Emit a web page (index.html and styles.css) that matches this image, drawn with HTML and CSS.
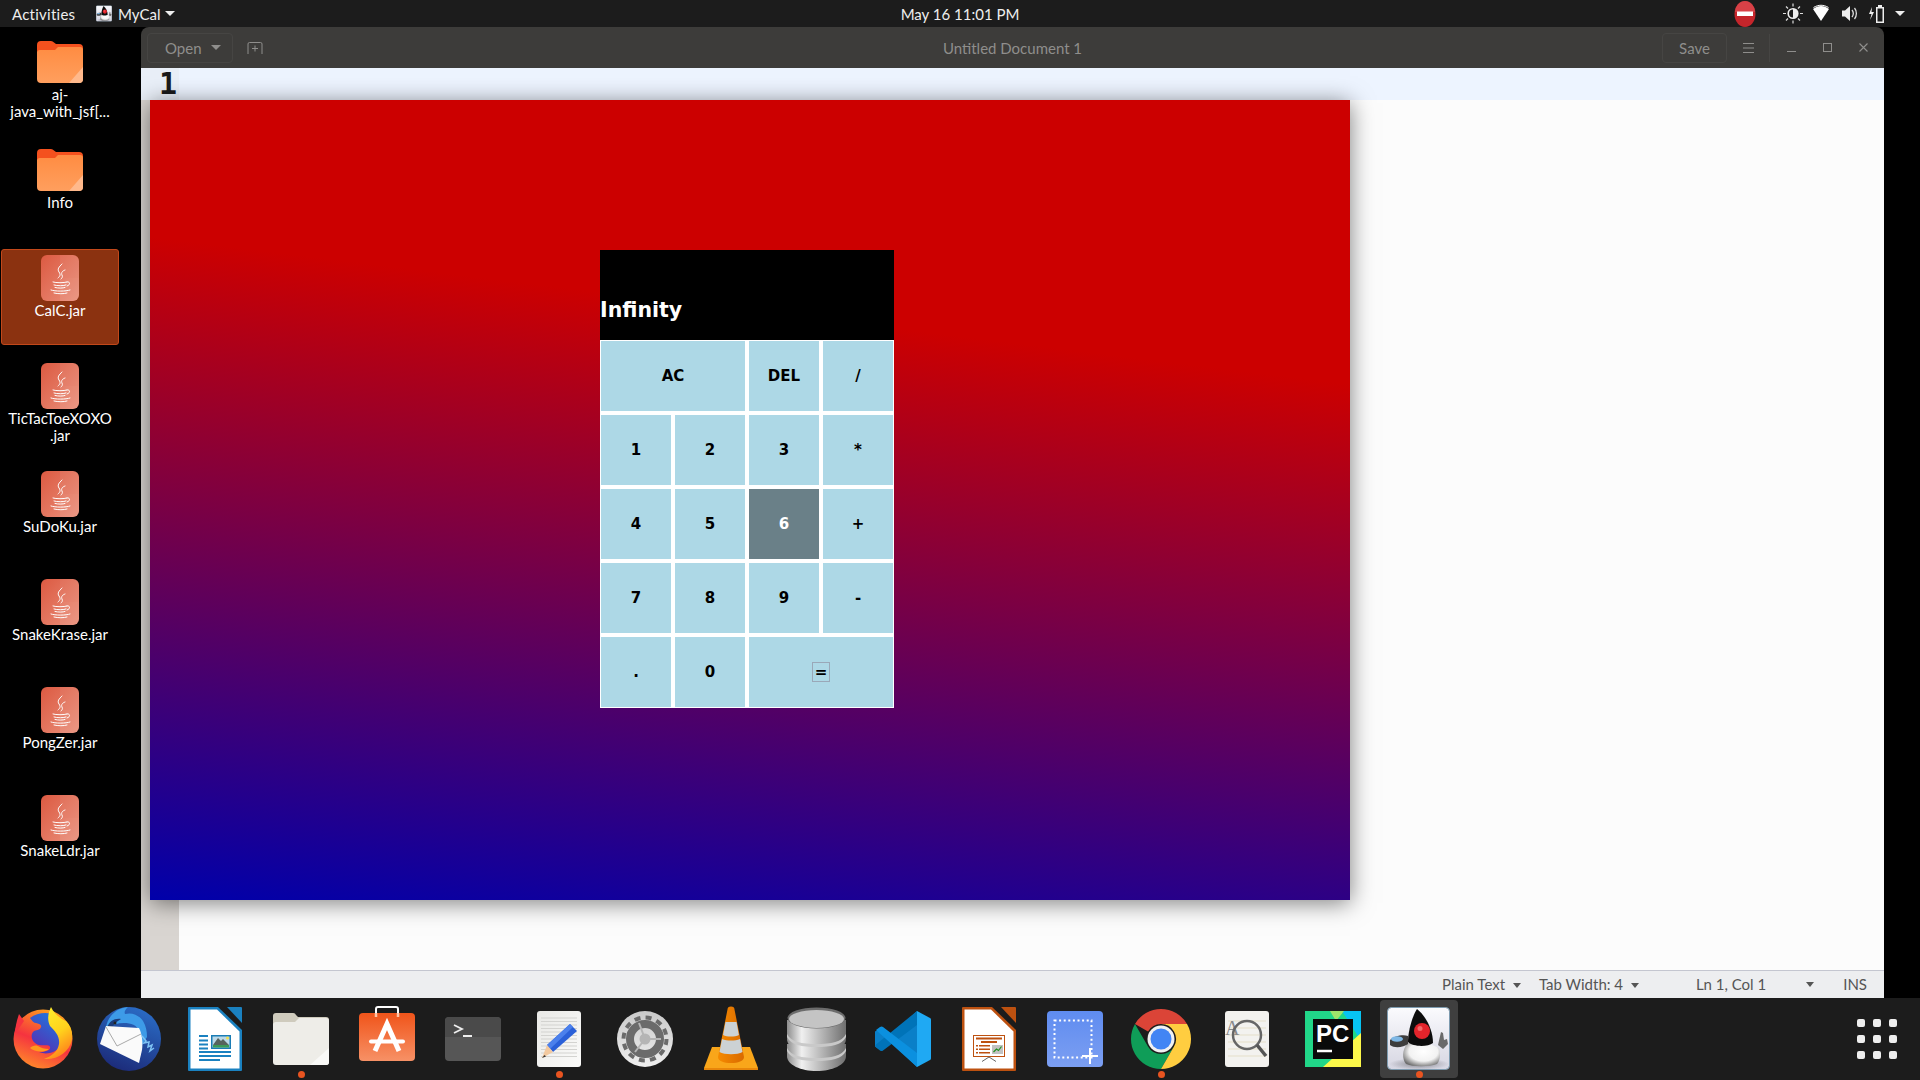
FILE: index.html
```html
<!DOCTYPE html>
<html lang="en">
<head>
  <meta charset="UTF-8" />
  <title>MyCal</title>
  <link rel="stylesheet" href="styles.css">
</head>
<body>

  <svg class="defs" width="0" height="0">
    <defs>
      <linearGradient id="g-folder" x1="0" y1="0" x2="0" y2="1"><stop offset="0" stop-color="#ff8c42"/><stop offset="1" stop-color="#ff9f5e"/></linearGradient>
      <linearGradient id="g-jar" x1="0" y1="0" x2="1" y2="1"><stop offset="0" stop-color="#dc5a42"/><stop offset="1" stop-color="#ea8f7a"/></linearGradient>
      <linearGradient id="g-ff" x1="0.7" y1="0" x2="0.3" y2="1"><stop offset="0" stop-color="#ffa51c"/><stop offset="0.55" stop-color="#f5333f"/><stop offset="1" stop-color="#ff8a2a"/></linearGradient>
      <linearGradient id="g-ffy" x1="0" y1="0" x2="0.4" y2="1"><stop offset="0" stop-color="#fff02e"/><stop offset="0.6" stop-color="#ffd21c"/><stop offset="1" stop-color="#ff8a1c"/></linearGradient>
      <linearGradient id="g-ffb" x1="0.8" y1="0" x2="0.2" y2="1"><stop offset="0" stop-color="#1b7be0"/><stop offset="1" stop-color="#5b2bb0"/></linearGradient>
      <linearGradient id="g-tb" x1="0.7" y1="0" x2="0.3" y2="1"><stop offset="0" stop-color="#2a6cc6"/><stop offset="1" stop-color="#1c2a78"/></linearGradient>
      <linearGradient id="g-bag" x1="0" y1="0" x2="0" y2="1"><stop offset="0" stop-color="#f0541a"/><stop offset="1" stop-color="#f79166"/></linearGradient>
      <linearGradient id="g-paper" x1="0" y1="0" x2="1" y2="1"><stop offset="0" stop-color="#e9e9e6"/><stop offset="1" stop-color="#fbfbfa"/></linearGradient>
      <linearGradient id="g-gear" x1="0" y1="0" x2="0" y2="1"><stop offset="0" stop-color="#c9c9c9"/><stop offset="1" stop-color="#efefef"/></linearGradient>
      <linearGradient id="g-cone" x1="0" y1="0" x2="1" y2="0"><stop offset="0" stop-color="#f58a00"/><stop offset="1" stop-color="#d96a00"/></linearGradient>
      <linearGradient id="g-db" x1="0" y1="0" x2="1" y2="0"><stop offset="0" stop-color="#8d8d8d"/><stop offset="0.25" stop-color="#f0f0f0"/><stop offset="1" stop-color="#6f6f6f"/></linearGradient>
      <linearGradient id="g-shot" x1="0" y1="0" x2="0" y2="1"><stop offset="0" stop-color="#5f8cf0"/><stop offset="1" stop-color="#7c9ff2"/></linearGradient>
      <linearGradient id="g-duke" x1="0" y1="0" x2="0" y2="1"><stop offset="0" stop-color="#fbfbfe"/><stop offset="1" stop-color="#d6d6e2"/></linearGradient>
      <radialGradient id="g-duke-body" cx="0.55" cy="0.4" r="0.65"><stop offset="0" stop-color="#fff"/><stop offset="0.6" stop-color="#f2f2f2"/><stop offset="1" stop-color="#6e6e6e"/></radialGradient>
      <radialGradient id="g-duke-floor"><stop offset="0" stop-color="#8a8a92"/><stop offset="1" stop-color="#8a8a92" stop-opacity="0"/></radialGradient>

      <symbol id="folder" viewBox="0 0 46 42">
        <path d="M0 4a4 4 0 0 1 4-4h10a4 4 0 0 1 3 1.500l2 1.500h23a4 4 0 0 1 4 4v10H0z" fill="#f4511e"/>
        <path d="M0 11a3 3 0 0 1 3-2h15l3-3h22a3 3 0 0 1 3 3v29a4 4 0 0 1-4 4H4a4 4 0 0 1-4-4z" fill="url(#g-folder)"/>
        <path d="M46 26v12a4 4 0 0 1-4 4H32z" fill="#ffb98c"/>
      </symbol>

      <symbol id="jar" viewBox="0 0 38 46">
        <rect width="38" height="46" rx="6" fill="url(#g-jar)"/>
        <path d="M19 0h13a6 6 0 0 1 6 6v17H19z" fill="#fff" opacity=".06"/>
        <path d="M19 23h19v17a6 6 0 0 1-6 6H19z" fill="#fff" opacity=".08"/>
        <g fill="none" stroke="#fff" stroke-width="1" stroke-linecap="round">
          <path d="M21 9c-3 3-5 5-3 8s1 4-1 6"/>
          <path d="M24 15c-3 1-4 3-3 5s0 3-1 4"/>
          <path d="M12 27c3 1 11 1 14 0M13 30c3 1 10 1 12 0M14 32.500c3 .8 8 .8 10 0"/>
          <path d="M26 27c3-1 4 3 0 4"/>
          <path d="M10 35c4 1.500 15 1.500 19 0M13 38c4 1 10 1 13 0"/>
        </g>
      </symbol>

      <symbol id="duke" viewBox="11 9 63 63">
        <rect x="11.500" y="9.500" width="62" height="62" rx="4" fill="url(#g-duke)" stroke="#7d9bb0"/>
        <ellipse cx="43" cy="66" rx="30" ry="6" fill="url(#g-duke-floor)"/>
        <path d="M31 46c4-3 18-3 23 0l9 4c2 6 1 13-2 16-8 3-24 3-31 0-4-5-4-14 1-20z" fill="url(#g-duke-body)"/>
        <path d="M41 11c-4 6-9 21-9 33 5 5 20 5 25 1 0-13-7-27-16-34z" fill="#0d0d0d"/>
        <circle cx="46" cy="33" r="8" fill="#e3242b"/>
        <circle cx="44" cy="30.500" r="2.500" fill="#f26a6a"/>
        <path d="M14 42c4-4 13-6 18-4v8c-4 3-13 5-18 1z" fill="#3d3d3d"/>
        <ellipse cx="21" cy="41" rx="6" ry="2.800" fill="#7fb8e6"/>
        <path d="M62 47l3-13 2 1 1 7 3-1 1 5-5 5z" fill="#6a6a6a"/>
      </symbol>
    </defs>
  </svg>

  <div class="screen">

    <header class="topbar">
      <div class="topbar-left">
        <span class="activities">Activities</span>
        <svg class="app-icon"><use href="#duke"/></svg>
        <span>MyCal</span>
        <span class="caret caret-light"></span>
      </div>
      <div class="clock">May 16 11:01 PM</div>
      <div class="topbar-right">
        <svg class="no-entry" viewBox="0 0 22 26">
          <ellipse cx="11" cy="13" rx="10.500" ry="13" fill="#c5252b"/>
          <path d="M1 11a10 11 0 0 1 20 0z" fill="#e5555a" opacity=".6"/>
          <rect x="3" y="10.500" width="16" height="4.500" fill="#fff"/>
        </svg>
        <svg class="tray" viewBox="0 0 28 27">
          <circle cx="14" cy="13.500" r="4.800" fill="none" stroke="#eee" stroke-width="1.600"/>
          <path d="M14 8.700a4.800 4.800 0 0 1 0 9.600z" fill="#eee"/>
          <path d="M14 3.500v3M14 20.500v3M4 13.500h3M21 13.500h3M7 6.500l2 2M19 18.500l2 2M7 20.500l2-2M19 8.500l2-2" stroke="#ddd" stroke-width="1.200"/>
        </svg>
        <svg class="tray" viewBox="0 0 28 27">
          <path d="M6 9c5-4 11-4 16 0l-8 12z" fill="#fff"/>
          <path d="M6.500 7.500c5-3 10-3 15 0" fill="none" stroke="#fff" stroke-width="1"/>
        </svg>
        <svg class="tray" viewBox="0 0 28 27">
          <path d="M7 10.500h3l5-4.500v15l-5-4.500H7z" fill="#eee"/>
          <path d="M17 10c1.500 2 1.500 5 0 7M19.500 8c2.500 3 2.500 8 0 11" fill="none" stroke="#ddd" stroke-width="1.300"/>
        </svg>
        <svg class="tray" viewBox="0 0 28 27">
          <path d="M9 7l-3 7h2.500l-1.500 6 4-8H8.500z" fill="#eee"/>
          <path d="M15 5h4v2h2v16h-8V7h2z" fill="#eee"/>
          <rect x="14.500" y="8.500" width="5" height="13" fill="#1c1c1c"/>
        </svg>
        <span class="caret caret-light caret-tray"></span>
      </div>
    </header>

    <div class="middle">

      <aside class="desktop">
        <div class="desk-item">
          <svg class="folder-icon"><use href="#folder"/></svg>
          <div class="desk-label">aj-<br>java_with_jsf[...</div>
        </div>
        <div class="desk-item">
          <svg class="folder-icon"><use href="#folder"/></svg>
          <div class="desk-label">Info</div>
        </div>
        <div class="desk-item selected">
          <svg class="jar-icon"><use href="#jar"/></svg>
          <div class="desk-label">CalC.jar</div>
        </div>
        <div class="desk-item">
          <svg class="jar-icon"><use href="#jar"/></svg>
          <div class="desk-label">TicTacToeXOXO<br>.jar</div>
        </div>
        <div class="desk-item">
          <svg class="jar-icon"><use href="#jar"/></svg>
          <div class="desk-label">SuDoKu.jar</div>
        </div>
        <div class="desk-item">
          <svg class="jar-icon"><use href="#jar"/></svg>
          <div class="desk-label">SnakeKrase.jar</div>
        </div>
        <div class="desk-item">
          <svg class="jar-icon"><use href="#jar"/></svg>
          <div class="desk-label">PongZer.jar</div>
        </div>
        <div class="desk-item">
          <svg class="jar-icon"><use href="#jar"/></svg>
          <div class="desk-label">SnakeLdr.jar</div>
        </div>
      </aside>

      <main class="window">
        <div class="win-header">
          <div class="win-left">
            <div class="hbtn open-btn">Open <span class="caret caret-dim"></span></div>
            <svg class="new-tab" viewBox="0 0 16 12">
              <path d="M1 12V2a1.500 1.500 0 0 1 1.500-1.500h11A1.500 1.500 0 0 1 15 2v10" fill="none" stroke="#8f8e8c"/>
              <path d="M8 3.500v6M5 6.500h6" stroke="#8f8e8c"/>
            </svg>
          </div>
          <div class="win-title">Untitled Document 1</div>
          <div class="win-right">
            <div class="hbtn save-btn">Save</div>
            <svg class="win-icon hamburger" viewBox="0 0 11 10"><path d="M0 .5h11M0 5h11M0 9.500h11" stroke="#8f8e8c"/></svg>
            <div class="win-sep"></div>
            <svg class="win-icon ctl-min" viewBox="0 0 9 9"><path d="M0 8.500h9" stroke="#8f8e8c" stroke-width="1.200"/></svg>
            <svg class="win-icon ctl-max" viewBox="0 0 9 9"><rect x=".5" y=".5" width="8" height="8" fill="none" stroke="#8f8e8c"/></svg>
            <svg class="win-icon ctl-close" viewBox="0 0 9 9"><path d="M.5.5l8 8M8.500.5l-8 8" stroke="#8f8e8c" stroke-width="1.100"/></svg>
          </div>
        </div>

        <div class="editor">
          <div class="gutter"><div class="line-no">1</div></div>
          <div class="text-area"><div class="current-line"></div></div>

          <!-- the calculator's own window, sitting over gedit -->
          <div class="calc-window">
            <div class="calc">
              <div class="calc-display">Infinity</div>
              <div class="calc-keys">
                <button class="key wide">AC</button>
                <button class="key">DEL</button>
                <button class="key">/</button>
                <button class="key">1</button>
                <button class="key">2</button>
                <button class="key">3</button>
                <button class="key">*</button>
                <button class="key">4</button>
                <button class="key">5</button>
                <button class="key hovered">6</button>
                <button class="key">+</button>
                <button class="key">7</button>
                <button class="key">8</button>
                <button class="key">9</button>
                <button class="key">-</button>
                <button class="key">.</button>
                <button class="key">0</button>
                <button class="key wide"><span class="focus-ring">=</span></button>
              </div>
            </div>
          </div>
        </div>

        <footer class="statusbar">
          <span class="st-item st-lang">Plain Text <span class="caret caret-status"></span></span>
          <span class="st-item st-tab">Tab Width: 4 <span class="caret caret-status"></span></span>
          <span class="st-item st-pos">Ln 1, Col 1</span>
          <span class="caret caret-status st-caret"></span>
          <span class="st-item st-ins">INS</span>
        </footer>
      </main>

      <div class="desk-right"></div>
    </div>

    <nav class="dock">
      <!-- firefox -->
      <div class="dock-item"><svg viewBox="0 0 86 82">
        <circle cx="43" cy="41" r="29.500" fill="url(#g-ff)"/>
        <path d="M15 36c0-7 2-14 4-20l5 7z" fill="#f5333f"/>
        <path d="M30 20c8-6 20-7 28-1 8 8 9 22 2 30-5 6-14 8-21 5 7 0 12-2 11-5-1-3-7-1-11-2-7-2-9-9-6-13 3-3 7-1 8-5 1-3-3-3-5-4-2 0-4-2-6-5z" fill="url(#g-ffb)"/>
        <path d="M51 9c-3 6-4 13-1 19 5 5 10 10 9 18-1 7-7 12-15 15 14 1 25-7 28-19 1-8-1-14-6-19-5-2-12-7-15-14z" fill="url(#g-ffy)"/>
        <path d="M30 50c4 4 14 5 19 1-5 0-8-1-11-3-3-1-6 0-8 2z" fill="#ff9a1c"/>
      </svg></div>
      <!-- thunderbird -->
      <div class="dock-item"><svg viewBox="0 0 86 82">
        <circle cx="43" cy="41" r="32" fill="url(#g-tb)"/>
        <path d="M20 30c1-10 9-20 22-21-3 3-4 5-3 7 7-2 14 1 18 7 3 5 4 10 4 16l-5 8-3-14c-2-6-8-8-15-8-6 0-13 2-18 5z" fill="#3d9be8"/>
        <path d="M21 30c2-7 8-10 14-9-5 3-8 6-9 9z" fill="#1c3c7a"/>
        <circle cx="29" cy="25" r="1.500" fill="#222"/>
        <path d="M14 46l6-18 33 2c3 6 4 14 3 22l-3 13z" fill="#fafafa"/>
        <path d="M20 29l11 19 24-12" fill="none" stroke="#a9a9a9"/>
        <path d="M56 38l4 5-2 2 5-1-1 5 4-2-2 6 4-3" fill="none" stroke="#7fc3f4" stroke-width="1.500"/>
      </svg></div>
      <!-- libreoffice writer -->
      <div class="dock-item"><svg viewBox="0 0 86 82">
        <path d="M17 9h29l24 23v40a1 1 0 0 1-1 1H17a1 1 0 0 1-1-1V10a1 1 0 0 1 1-1z" fill="#1a81c0"/>
        <path d="M18.500 11.500h26.500l22.500 22v37h-49z" fill="#fff"/>
        <path d="M55 9h14a1 1 0 0 1 1 1v15z" fill="#1a81c0"/>
        <path d="M27 37h9v2h-9zM27 41.500h9v2h-9zM27 45.500h9v2h-9zM27 49.500h9v2h-9zM27 53h32v2H27zM27 57h32v2H27zM27 61h21v2H27z" fill="#1a81c0"/>
        <rect x="39" y="37" width="20" height="14" fill="#1a7cb5"/>
        <rect x="40.500" y="38.500" width="17" height="11" fill="#bcd9e8"/>
        <path d="M41 47l5-7 3 3 2-2 6 6v2H41z" fill="#56635d"/>
        <path d="M41 47h16v2.500H41z" fill="#3b9a57"/>
        <circle cx="55.500" cy="40" r="1.500" fill="#f0e050"/>
      </svg></div>
      <!-- files -->
      <div class="dock-item"><svg viewBox="0 0 86 82">
        <path d="M15 18a3 3 0 0 1 3-3h17a3 3 0 0 1 3 2l2 2h28a3 3 0 0 1 3 3v10H15z" fill="#cfcbbd"/>
        <path d="M15 26a3 3 0 0 1 3-2h19l4-4h27a3 3 0 0 1 3 3v41a3 3 0 0 1-3 3H18a3 3 0 0 1-3-3z" fill="#eeede8"/>
        <path d="M71 50v14a3 3 0 0 1-3 3H52z" fill="#f9f9f7"/>
      </svg><span class="run-dot"></span></div>
      <!-- ubuntu software -->
      <div class="dock-item"><svg viewBox="0 0 86 82">
        <path d="M32 18v-7a2 2 0 0 1 2-2h18a2 2 0 0 1 2 2v7" fill="none" stroke="#fff" stroke-width="2"/>
        <rect x="15" y="15" width="56" height="48" rx="4" fill="url(#g-bag)"/>
        <path d="M32 15v4M54 15v4" stroke="#ffc6a8" stroke-width="2.500"/>
        <path d="M31 53l12-27 12 27" fill="none" stroke="#fff" stroke-width="5"/>
        <path d="M27 43.500h32" stroke="#fff" stroke-width="4" stroke-linecap="round"/>
      </svg></div>
      <!-- terminal -->
      <div class="dock-item"><svg viewBox="0 0 86 82">
        <rect x="15" y="19" width="56" height="44" rx="4" fill="#565656"/>
        <path d="M15 23a4 4 0 0 1 4-4h48a4 4 0 0 1 4 4v16H15z" fill="#4a4a4a"/>
        <path d="M24 27l8 4-8 4" fill="none" stroke="#eee" stroke-width="1.800"/>
        <path d="M33 38h9" stroke="#eee" stroke-width="2"/>
      </svg></div>
      <!-- gedit -->
      <div class="dock-item"><svg viewBox="0 0 86 82">
        <rect x="21" y="13" width="44" height="56" rx="3" fill="url(#g-paper)"/>
        <path d="M25 20h36M25 23.500h36M25 27h36M25 30.500h36M25 34h36M25 37.500h36M25 41h36M25 44.500h36M25 48h36M25 51.500h36M25 55h36M25 58.500h36" stroke="#d3d3d0"/>
        <path d="M31 47l23-21 7 7-24 21z" fill="#2a60d8"/>
        <path d="M31 47l23-21 3 3-23 22z" fill="#4b80ec"/>
        <path d="M31 47l6 7-11 6z" fill="#f2c9a0"/>
        <path d="M28.500 57l-2.500 3 4-1.500z" fill="#333"/>
      </svg><span class="run-dot"></span></div>
      <!-- settings -->
      <div class="dock-item"><svg viewBox="0 0 86 82">
        <circle cx="43" cy="41" r="28" fill="url(#g-gear)"/>
        <circle cx="43" cy="41" r="21.500" fill="none" stroke="#6b6b6b" stroke-width="4" stroke-dasharray="6 5.250"/>
        <circle cx="43" cy="41" r="15" fill="none" stroke="#6b6b6b" stroke-width="8"/>
        <circle cx="43" cy="41" r="5.500" fill="#b5b5b5"/>
        <path d="M43 41L37 25M43 41L59 41M43 41L33 54" stroke="#b5b5b5" stroke-width="2"/>
      </svg></div>
      <!-- vlc -->
      <div class="dock-item"><svg viewBox="0 0 86 82">
        <path d="M24 49l-8 21v2h54v-2l-8-21z" fill="#f9a61a"/>
        <path d="M16 70h54v2H16z" fill="#e8860a"/>
        <path d="M39.500 11.500a3.500 3 0 0 1 7 0L56 59c0 4-6 6-13 6s-13-2-13-6z" fill="url(#g-cone)"/>
        <path d="M37.500 24h11l2.400 13c-4 2-12 2-15.800 0z" fill="#ccd2d4"/>
        <path d="M34 41c5 2 13 2 18 0l2.500 13c-5 3-18 3-23 0z" fill="#ccd2d4"/>
      </svg></div>
      <!-- database -->
      <div class="dock-item"><svg viewBox="0 0 86 82">
        <path d="M13 58c0 9 14 15 29.500 15S72 67 72 58V46H13z" fill="url(#g-db)"/>
        <path d="M13 41c0 9 14 14 29.500 14S72 50 72 41V32H13z" fill="url(#g-db)"/>
        <path d="M13 22v13c0 8 14 13 29.500 13S72 43 72 35V22z" fill="url(#g-db)"/>
        <path d="M13 36c4 8 15 10 29.500 10S68 44 72 36v3c-4 8-15 10-29.500 10S17 47 13 39zM13 50c4 8 15 10 29.500 10S68 58 72 50v3c-4 8-15 10-29.500 10S17 61 13 53z" fill="#c9c9c9"/>
        <ellipse cx="42.500" cy="20" rx="29" ry="10.500" fill="#6c6c6c"/>
        <ellipse cx="42.500" cy="21" rx="27.500" ry="9" fill="#c4c4c4"/>
      </svg></div>
      <!-- vs code -->
      <div class="dock-item"><svg viewBox="0 0 86 82">
        <path d="M57 13L31 38 21 30l-6 3.500v15L21 52l10-8 26 25z" fill="#0a7fc8"/>
        <path d="M57 13v14L23 52.500c-1 1-2 .5-3 0l-4-3c-1-1-1-2 0-3z" fill="#0073b8"/>
        <path d="M16 32l4-3c1-.5 2-1 3 0l34 26v14z" fill="#0b90df"/>
        <path d="M57 13l13 7c.7.4 1 1 1 2v38c0 1-.3 1.600-1 2l-13 7z" fill="#1fa9f3"/>
      </svg></div>
      <!-- libreoffice impress -->
      <div class="dock-item"><svg viewBox="0 0 86 82">
        <path d="M17 9h29l24 23v40a1 1 0 0 1-1 1H17a1 1 0 0 1-1-1V10a1 1 0 0 1 1-1z" fill="#bd5110"/>
        <path d="M18.500 11.500h26.500l22.500 22v37h-49z" fill="#fff"/>
        <path d="M55 9h14a1 1 0 0 1 1 1v15z" fill="#bd5110"/>
        <rect x="27.500" y="37.500" width="31" height="21" fill="#fff" stroke="#bd5110"/>
        <path d="M30 39.500h26v2H30zM35 43h16v2H35zM30 47h2v1.500h-2zM33 47h11v1.500H33zM30 50.500h2v1.500h-2zM33 50.500h11v1.500H33zM30 54h2v1.500h-2zM33 54h11v1.500H33z" fill="#bd5110"/>
        <rect x="46" y="47" width="11" height="9" fill="#c2c2c2"/>
        <path d="M47.500 54l3-3 2 1.500 3-4" fill="none" stroke="#20901f" stroke-width="1.200"/>
        <path d="M43 59l-7 4.500M43 59l7 4.500" stroke="#666" stroke-width="1"/>
      </svg></div>
      <!-- screenshot -->
      <div class="dock-item"><svg viewBox="0 0 86 82">
        <rect x="15" y="13" width="56" height="56" rx="4" fill="url(#g-shot)"/>
        <rect x="22.500" y="22.500" width="37" height="37" fill="none" stroke="#fff" stroke-width="2" stroke-dasharray="2 2.600"/>
        <path d="M58 50v16M50 58h16" stroke="#fff" stroke-width="2"/>
      </svg></div>
      <!-- chrome -->
      <div class="dock-item"><svg viewBox="0 0 86 82">
        <path d="M43 11a30 30 0 0 1 26 15H43a15 15 0 0 0-13 7.500L17 26a30 30 0 0 1 26-15z" fill="#db4437"/>
        <path d="M17 26l13 22.500a15 15 0 0 0 26 0L43 71a30 30 0 0 1-26-45z" fill="#0f9d58"/>
        <path d="M69 26H43a15 15 0 0 1 13 22.500L43 71a30 30 0 0 0 26-45z" fill="#ffcd40"/>
        <circle cx="43" cy="41" r="13.500" fill="#f1f1f1"/>
        <circle cx="43" cy="41" r="10.500" fill="#4285f4"/>
      </svg><span class="run-dot"></span></div>
      <!-- font viewer -->
      <div class="dock-item"><svg viewBox="0 0 86 82">
        <rect x="21" y="13" width="44" height="56" rx="3" fill="#f3f2ef"/>
        <path d="M24 23h38M24 30h38M24 37h38M24 44h38M24 51h38M24 58h38" stroke="#e5dfc9"/>
        <text x="21" y="37" class="icon-a">A</text>
        <circle cx="43" cy="37" r="14" fill="none" stroke="#666" stroke-width="2.500"/>
        <path d="M53 47l9 11" stroke="#555" stroke-width="3.500"/>
      </svg></div>
      <!-- pycharm -->
      <div class="dock-item"><svg viewBox="0 0 86 82">
        <rect x="15" y="13" width="56" height="56" fill="#21d789"/>
        <path d="M52 13h19v30z" fill="#07c3f2"/>
        <path d="M40 13h14l-8 10z" fill="#9ee46b"/>
        <path d="M71 35v34H33z" fill="#fcf84a"/>
        <rect x="23" y="21" width="40" height="40" fill="#0a0a0a"/>
        <text x="26" y="44" class="icon-pc">PC</text>
        <path d="M27 53h15" stroke="#fff" stroke-width="2.500"/>
      </svg></div>
      <!-- the running java app -->
      <div class="dock-item active"><svg class="duke-dock"><use href="#duke"/></svg><span class="run-dot"></span></div>

      <div class="app-grid">
        <span></span><span></span><span></span>
        <span></span><span></span><span></span>
        <span></span><span></span><span></span>
      </div>
    </nav>

  </div>

</body>
</html>
```

FILE: styles.css
```css
* {
  box-sizing: border-box;
}

body {
  margin: 0;
  background: #000;
  font-family: "Lato", "Noto Sans", sans-serif;
  overflow: hidden;
}

.defs {
  position: absolute;
}

.screen {
  width: 1920px;
  height: 1080px;
  display: flex;
  flex-direction: column;
}

/* top bar */
.topbar {
  height: 27px;
  flex: none;
  background: #1c1c1c;
  color: #eee;
  font-size: 15px;
  display: grid;
  grid-template-columns: 1fr auto 1fr;
  align-items: center;
}

.topbar-left {
  display: flex;
  align-items: center;
  padding-left: 12px;
}

.activities {
  width: 84px;
  letter-spacing: 0.25px;
}

.app-icon {
  width: 16px;
  height: 17px;
  margin-right: 6px;
}

.topbar-right {
  display: flex;
  align-items: center;
  justify-content: flex-end;
  padding-right: 15px;
}

.no-entry {
  width: 22px;
  height: 26px;
  margin-right: 23px;
}

.tray {
  width: 28px;
  height: 27px;
}

.caret {
  display: inline-block;
  width: 0;
  height: 0;
  border-left: 5px solid transparent;
  border-right: 5px solid transparent;
}

.caret-light {
  border-top: 5px solid #eee;
  margin-left: 5px;
}

.caret-tray {
  margin-left: 4px;
}

.caret-dim {
  border-top: 5px solid #8f8e8c;
  margin-left: 9px;
  vertical-align: 2px;
}

.caret-status {
  border-left-width: 4.500px;
  border-right-width: 4.500px;
  border-top: 5px solid #555;
  margin-left: 4px;
  vertical-align: 2px;
}

/* middle */
.middle {
  flex: 1;
  display: flex;
  min-height: 0;
}

.desktop {
  width: 141px;
  flex: none;
  padding: 6px 0 0 1px;
  background: #000;
}

.desk-item {
  width: 118px;
  height: 96px;
  margin-bottom: 12px;
  padding-top: 5px;
  display: flex;
  flex-direction: column;
  align-items: center;
  color: #fff;
  border: 1px solid transparent;
  border-radius: 3px;
}

.desk-item.selected {
  background: #8b3210;
  border-color: #c2481a;
}

.folder-icon {
  width: 46px;
  height: 42px;
  margin: 2px 0;
}

.jar-icon {
  width: 38px;
  height: 46px;
}

.desk-label {
  margin-top: 1px;
  font-size: 15px;
  line-height: 17px;
  text-align: center;
  white-space: nowrap;
}

/* gedit window */
.window {
  width: 1743px;
  flex: none;
  display: flex;
  flex-direction: column;
  border-radius: 8px 8px 0 0;
  overflow: hidden;
}

.desk-right {
  flex: 1;
  background: #000;
}

.win-header {
  height: 41px;
  flex: none;
  background: #3d3c3a;
  color: #8f8e8c;
  font-size: 15px;
  display: grid;
  grid-template-columns: 1fr auto 1fr;
  align-items: center;
}

.win-left {
  display: flex;
  align-items: center;
  padding-left: 6px;
}

.win-right {
  display: flex;
  align-items: center;
  justify-content: flex-end;
  padding-right: 16px;
}

.hbtn {
  height: 30px;
  display: flex;
  align-items: center;
  border: 1px solid #464543;
  border-radius: 4px;
}

.open-btn {
  width: 86px;
  padding-left: 17px;
}

.new-tab {
  width: 16px;
  height: 12px;
  margin-left: 14px;
}

.save-btn {
  width: 65px;
  justify-content: center;
  margin-right: 16px;
}

.win-icon {
  flex: none;
}

.hamburger {
  width: 11px;
  height: 10px;
  margin-right: 15px;
}

.win-sep {
  width: 1px;
  height: 28px;
  background: #464543;
  margin-right: 17px;
}

.ctl-min,
.ctl-max,
.ctl-close {
  width: 9px;
  height: 9px;
}

.ctl-max {
  margin: 0 27px;
}

.editor {
  flex: 1;
  position: relative;
  display: flex;
  min-height: 0;
  background: #fcfcfc;
}

.gutter {
  width: 38px;
  flex: none;
  background: #d9d5d1;
}

.line-no {
  height: 32px;
  background: #e9eff8;
  padding-right: 2px;
  font-family: "DejaVu Sans Mono", monospace;
  font-weight: bold;
  font-size: 30px;
  line-height: 32px;
  text-align: right;
  color: #1a1a1a;
}

.text-area {
  flex: 1;
}

.current-line {
  height: 32px;
  background: #edf4ff;
}

.calc-window {
  position: absolute;
  left: 9px;
  top: 32px;
  width: 1200px;
  height: 800px;
  padding: 150px 0 0 450px;
  background: linear-gradient(187deg, #cc0000 30%, #0000aa 100%);
  box-shadow: 0 3px 22px rgba(0, 0, 0, 0.5);
}

.calc {
  width: 294px;
  font-family: "DejaVu Sans", sans-serif;
  font-weight: bold;
}

.calc-display {
  height: 90px;
  background: #000;
  color: #fff;
  font-size: 20.500px;
  line-height: 24px;
  padding: 48px 0 0 0;
}

.calc-keys {
  display: grid;
  grid-template-columns: repeat(4, 70px);
  grid-auto-rows: 70px;
  gap: 4px;
  padding: 1px;
  background: #fff;
}

.key {
  border: none;
  padding: 0;
  background: #add8e6;
  color: #000;
  font-family: inherit;
  font-weight: bold;
  font-size: 15px;
}

.key.wide {
  grid-column: span 2;
}

.key.hovered {
  background: #6a8088;
  color: #fff;
}

.focus-ring {
  display: inline-block;
  padding: 0 2px;
  border: 1px solid #9aa8b8;
  line-height: 18px;
}

.statusbar {
  height: 28px;
  flex: none;
  display: flex;
  align-items: center;
  padding: 0 17px 1px 0;
  background: #edeef0;
  border-top: 1px solid #c4c6d0;
  color: #555;
  font-size: 15px;
  justify-content: flex-end;
}

.st-tab {
  margin-left: 18px;
}

.st-pos {
  margin-left: 57px;
}

.st-caret {
  margin-left: 40px;
}

.st-ins {
  margin-left: 29px;
}

/* dock */
.dock {
  height: 82px;
  flex: none;
  display: flex;
  background: #1c1c1c;
}

.dock-item {
  position: relative;
  width: 86px;
  height: 82px;
  flex: none;
}

.dock-item svg {
  display: block;
  width: 86px;
  height: 82px;
}

.dock-item.active::before {
  content: "";
  position: absolute;
  left: 4px;
  top: 2px;
  width: 78px;
  height: 78px;
  background: #3f3f3f;
  border-radius: 4px;
}

.dock-item .duke-dock {
  position: absolute;
  left: 11px;
  top: 9px;
  width: 63px;
  height: 63px;
}

.run-dot {
  position: absolute;
  left: 39.500px;
  top: 73px;
  width: 7px;
  height: 7px;
  border-radius: 50%;
  background: #e95420;
}

.icon-a {
  font-family: "Liberation Serif", serif;
  font-size: 20px;
  fill: #8a8a8a;
}

.icon-pc {
  font-family: "Liberation Sans", sans-serif;
  font-weight: bold;
  font-size: 24px;
  fill: #fff;
}

.app-grid {
  margin-left: auto;
  margin-right: 23px;
  align-self: center;
  display: grid;
  grid-template-columns: repeat(3, 8px);
  grid-auto-rows: 8px;
  gap: 8px;
}

.app-grid span {
  background: #eee;
  border-radius: 2px;
}
```
